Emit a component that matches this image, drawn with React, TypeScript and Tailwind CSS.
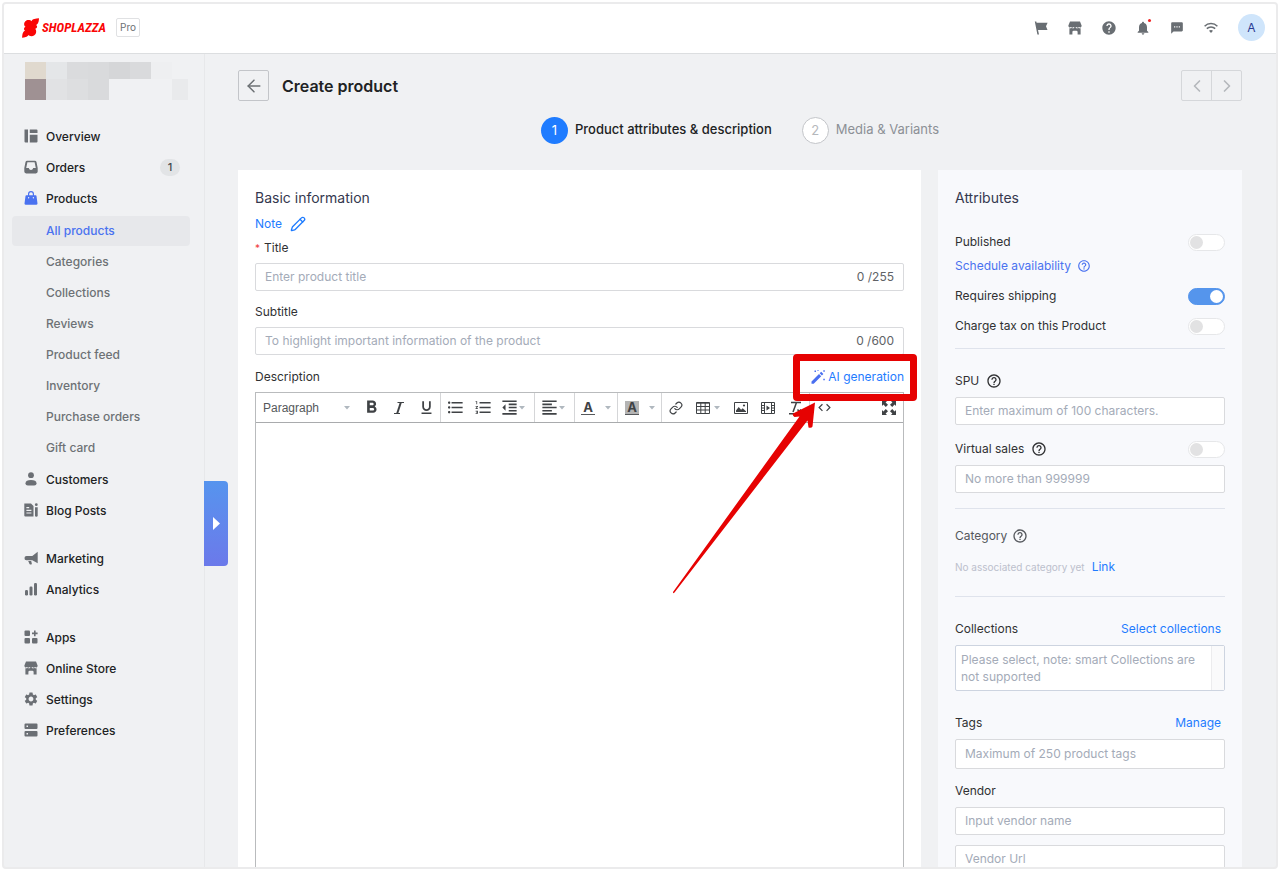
import type { ReactNode } from "react"
import clsx from "clsx"
import { ArrowLeft, ChevronLeft, ChevronRight, Link, Pencil } from "lucide-react"
import {
  MdCode,
  MdFormatAlignLeft,
  MdFormatBold,
  MdFormatIndentDecrease,
  MdFormatListBulleted,
  MdFormatListNumbered,
  MdFormatUnderlined,
  MdHelp,
  MdHelpOutline,
  MdNotifications,
  MdSettings,
  MdTextsms,
} from "react-icons/md"

type IconProps = {
  children: ReactNode
  className?: string
}

// Filled icon on a 14px grid
function Glyph({ children, className = "size-3.5" }: IconProps) {
  return (
    <svg viewBox="0 0 14 14" fill="currentColor" className={clsx("shrink-0", className)} aria-hidden="true">
      {children}
    </svg>
  )
}

const StoreIcon = () => (
  <Glyph>
    <path d="M2 .5h10l1.600 3.900v.7a1.500 1.500 0 0 1-2.500 1 1.800 1.800 0 0 1-2.700 0 1.800 1.800 0 0 1-2.800 0 1.800 1.800 0 0 1-2.700 0 1.500 1.500 0 0 1-2.500-1v-.7z" />
    <path d="M1.400 7.300c1 .2 1.800-.1 2.200-.4.900.6 2 .5 2.700 0h1.400c.8.500 1.900.6 2.700 0 .5.300 1.200.6 2.200.4v6.200H9.600V11a1.300 1.300 0 0 0-1.300-1.300H5.700A1.300 1.300 0 0 0 4.400 11v2.500h-3z" />
  </Glyph>
)

const icons: Record<string, ReactNode> = {
  overview: (
    <Glyph>
      <path d="M.5 .5h3.500v13H1.500a1 1 0 0 1-1-1zM5.800 .5h6.700a1 1 0 0 1 1 1V4H5.800zM5.800 5.800h7.700v6.700a1 1 0 0 1-1 1H5.800z" />
    </Glyph>
  ),
  orders: (
    <Glyph>
      <path
        fillRule="evenodd"
        d="M3.200 .7h7.600a1.800 1.800 0 0 1 1.700 1.400l1.200 6v3.500a1.800 1.800 0 0 1-1.800 1.800H2.100a1.800 1.800 0 0 1-1.800-1.800V8.100l1.200-6A1.800 1.800 0 0 1 3.200 .7zm.2 1.500L2.200 8h2.600c.3 1.300 1.100 1.900 2.200 1.900s1.900-.6 2.200-1.900h2.600l-1.200-5.800z"
      />
    </Glyph>
  ),
  products: (
    <Glyph>
      <path
        fillRule="evenodd"
        d="M4 4.200V3a3 3 0 0 1 6 0v1.200h1.600a.9.9 0 0 1 .9.8l1 7.600a1 1 0 0 1-1 1.100h-11a1 1 0 0 1-1-1.100L1.500 5a.9.9 0 0 1 .9-.8zm1.200 0h3.600V3a1.800 1.800 0 0 0-3.600 0zM4.600 6a.7.7 0 1 0 0 1.400.7.7 0 0 0 0-1.400zm4.800 0a.7.7 0 1 0 0 1.400.7.7 0 0 0 0-1.400z"
      />
    </Glyph>
  ),
  customers: (
    <Glyph>
      <circle cx="7" cy="3.200" r="2.900" />
      <path d="M1.500 11.200C1.500 9 3.600 8 7 8s5.500 1 5.500 3.200c0 1.500-1 2.200-2.300 2.200H3.800c-1.300 0-2.300-.7-2.300-2.200z" />
    </Glyph>
  ),
  blog: (
    <Glyph>
      <path
        fillRule="evenodd"
        d="M.3 .5H7L9.500 3v10.500H1.300a1 1 0 0 1-1-1zM2.400 4v1.200h2.800V4zm0 2.700v1.200h5V6.700zm0 2.700v1.200h5V9.400z"
      />
      <path d="M11 4.200h2.700v8.300a1.300 1.300 0 0 1-2.700 0z" />
      <circle cx="12.300" cy="1.700" r="1.400" />
    </Glyph>
  ),
  marketing: (
    <Glyph>
      <path d="M13.700 .8v11.500L8.300 9.200H2.500A2 2 0 0 1 .5 7a2 2 0 0 1 2-2h5.800zM4.200 10h3l.6 2.400c.1.700-.3 1.100-.9 1.100h-.6c-.5 0-.8-.3-.9-.8z" />
    </Glyph>
  ),
  analytics: (
    <Glyph>
      <rect x="1" y="8" width="3" height="5.500" rx="1.200" />
      <rect x="5.500" y="4.500" width="3" height="9" rx="1.200" />
      <rect x="10" y="1" width="3" height="12.500" rx="1.200" />
    </Glyph>
  ),
  apps: (
    <Glyph>
      <rect x=".5" y=".6" width="5.500" height="5.500" rx="1" />
      <rect x=".5" y="8" width="5.500" height="5.500" rx="1" />
      <rect x="8" y="8" width="5.500" height="5.500" rx="1" />
      <path d="M10 .6h1.600v2h2v1.600h-2v2H10v-2H8V2.600h2z" />
    </Glyph>
  ),
  store: <StoreIcon />,
  settings: <MdSettings className="-mx-px size-4 shrink-0" />,
  preferences: (
    <Glyph>
      <path
        fillRule="evenodd"
        d="M1.500.5h11a1 1 0 0 1 1 1V5a1 1 0 0 1-1 1h-11a1 1 0 0 1-1-1V1.500a1 1 0 0 1 1-1zm1 2V4H4V2.500zM1.500 8h11a1 1 0 0 1 1 1v3.500a1 1 0 0 1-1 1h-11a1 1 0 0 1-1-1V9a1 1 0 0 1 1-1zm1 2v1.500H4V10z"
      />
    </Glyph>
  ),
}

type NavItem = {
  label: string
  icon: string
  count?: number
  active?: boolean
  children?: string[]
}

const NAV: NavItem[][] = [
  [
    { label: "Overview", icon: "overview" },
    { label: "Orders", icon: "orders", count: 1 },
    {
      label: "Products",
      icon: "products",
      active: true,
      children: [
        "All products",
        "Categories",
        "Collections",
        "Reviews",
        "Product feed",
        "Inventory",
        "Purchase orders",
        "Gift card",
      ],
    },
    { label: "Customers", icon: "customers" },
    { label: "Blog Posts", icon: "blog" },
  ],
  [
    { label: "Marketing", icon: "marketing" },
    { label: "Analytics", icon: "analytics" },
  ],
  [
    { label: "Apps", icon: "apps" },
    { label: "Online Store", icon: "store" },
    { label: "Settings", icon: "settings" },
    { label: "Preferences", icon: "preferences" },
  ],
]

// Placeholder blocks for the hidden store name
const MOSAIC = [
  ["bg-[#e0d9ce]", "bg-[#e4e6e8]", "bg-[#dadbdd]", "bg-[#d9dadc]", "bg-[#d5d6d8]", "bg-[#d9dadc]", "bg-[#eeeff1]", ""],
  ["bg-[#9f9193]", "bg-[#e1e2e4]", "bg-[#dddee0]", "bg-[#d9dadc]", "", "", "", "bg-[#e9eaec]"],
]

function Header() {
  return (
    <header className="flex h-[50px] shrink-0 items-center justify-between border-b border-[#dcdee0] bg-white pb-0.5 pl-[18px] pr-[11px]">
      <div className="flex items-center">
        <a href="#home" className="flex items-center gap-[3px] text-[#fa0606]" aria-label="Shoplazza">
          <svg viewBox="0 0 17 20" fill="currentColor" className="h-5 w-[17px]" aria-hidden="true">
            <path d="M17 .3c-.1 2.400-.5 4.200-1.200 5.300-.4.600-1 1-1.600 1.300 1 .8 1.200 2 .5 2.900-.4.600-1 .8-1.500 1 1 1 1.200 2.800.8 4.200-.6 2-2.300 3.200-4.600 3.200-1.400 0-2.400-.5-3-1.200-.5 1-1.500 1.700-2.700 2.100-1.100.4-2.300.6-3.600.7.1-2.300.3-4.200 1-5.400.5-.9 1.200-1.400 2-1.600-1-.7-1.400-1.900-.8-3 .3-.5.700-.8 1.200-1C2 7.700 1.700 5.700 2.600 4.200 3.600 2.500 5.500 1.900 7.200 2.100c1 .1 1.700.5 2.200 1.100.5-1 1.500-1.700 2.900-2.100C13.700.7 15.300.5 17 .3z" />
          </svg>
          <span className="w-[65px] font-['Roboto_Condensed','Liberation_Sans',sans-serif] text-[13px] font-bold italic leading-5">
            SHOPLAZZA
          </span>
        </a>
        <span className="ml-[9px] rounded-xs border border-[#e0e1e3] px-[3px] text-[10px] leading-[17px] text-[#6d7175]">
          Pro
        </span>
      </div>

      <div className="flex items-center gap-5 text-[#696e73]">
        <button aria-label="Tasks">
          <Glyph>
            <path d="M.8.500h1.500l.3 1.300h11L12 5.300l1.500 3.600H4l1 4.600H3.400z" />
          </Glyph>
        </button>
        <button aria-label="View store">
          <StoreIcon />
        </button>
        <button aria-label="Help">
          <MdHelp className="-mx-px size-4" />
        </button>
        <button aria-label="Notifications" className="relative">
          <MdNotifications className="-mx-px size-4" />
          <span className="absolute -right-px -top-px size-[3px] rounded-full bg-[#f02020]" />
        </button>
        <button aria-label="Messages">
          <MdTextsms className="size-3.5" />
        </button>
        <button aria-label="Network">
          <svg viewBox="0 0 14 14" fill="none" stroke="currentColor" strokeWidth="1.500" className="size-3.5" aria-hidden="true">
            <path d="M.6 5.200a9 9 0 0 1 12.800 0M2.800 7.600a6 6 0 0 1 8.400 0" />
            <path d="M5 9.800a3 3 0 0 1 4 0L7 12z" fill="currentColor" stroke="none" />
          </svg>
        </button>
        <button className="size-[27px] rounded-full bg-[#cfe5fb] text-[12px] text-[#2b3a92]">A</button>
      </div>
    </header>
  )
}

function Sidebar() {
  return (
    <aside className="w-[201px] shrink-0 border-r border-[#e7e8ea] pl-2 pr-[14px] pt-2">
      <div className="ml-[13px] h-[38px]">
        {MOSAIC.map((row, index) => (
          <div key={index} className={clsx("flex", index === 0 ? "h-[17px]" : "h-[21px]")}>
            {row.map((color, cell) => (
              <span key={cell} className={clsx("w-[21px] last:w-4", color)} />
            ))}
          </div>
        ))}
      </div>

      <nav className="mt-[21px] space-y-[17px]">
        {NAV.map((group, index) => (
          <ul key={index}>
            {group.map((item) => (
              <li key={item.label}>
                <a href="#nav" className="flex h-[31px] items-center pl-3 pr-2.5 text-[12px] font-medium text-[#202223]">
                  <span className={clsx("pb-px", item.active ? "text-[#4a72f0]" : "text-[#6b6f74]")}>
                    {icons[item.icon]}
                  </span>
                  <span className="ml-2">{item.label}</span>
                  {item.count && (
                    <span className="ml-auto w-5 rounded-full bg-[#e2e4e6] text-center text-[11px] leading-[17px] text-[#44474a]">
                      {item.count}
                    </span>
                  )}
                </a>

                {item.children && (
                  <ul className="mt-0.5">
                    {item.children.map((child, i) => (
                      <li key={child} className="h-[31px]">
                        <a
                          href="#nav"
                          className={clsx(
                            "flex h-[30px] items-center rounded-sm pl-[34px] text-[12px] font-medium",
                            i === 0 ? "bg-[#e7e8eb] text-[#4a72f0]" : "text-[#6d7175]",
                          )}
                        >
                          {child}
                        </a>
                      </li>
                    ))}
                  </ul>
                )}
              </li>
            ))}
          </ul>
        ))}
      </nav>
    </aside>
  )
}

type FieldProps = {
  id: string
  placeholder: string
  count?: string
  className?: string
}

function Field({ id, placeholder, count, className = "h-7" }: FieldProps) {
  return (
    <div className={clsx("flex items-center rounded-xs border border-[#d9dadd] bg-white px-[9px] text-[12px]", className)}>
      <input
        id={id}
        aria-label={placeholder}
        placeholder={placeholder}
        className="min-w-0 flex-1 bg-transparent outline-none placeholder:text-[#a4abb8]"
      />
      {count && <span className="text-[#606266]">{count}</span>}
    </div>
  )
}

function Caret() {
  return (
    <svg viewBox="0 0 6 4" className="h-1 w-1.5 shrink-0 fill-[#b0b8bf]" aria-hidden="true">
      <path d="M0 0h6L3 3.500z" />
    </svg>
  )
}

type ToolProps = {
  label: string
  children: ReactNode
  className?: string
}

function Tool({ label, children, className = "w-[27px]" }: ToolProps) {
  return (
    <button aria-label={label} className={clsx("flex h-full shrink-0 items-center justify-center", className)}>
      {children}
    </button>
  )
}

function Toolbar() {
  return (
    <div className="flex h-[30px] items-stretch border-b border-[#a9abad] text-[#3f4245]">
      <div className="flex border-r border-[#d5d6d8]">
        <label className="relative flex w-[102px] items-center pl-[7px]">
          <select
            aria-label="Text style"
            className="w-[88px] appearance-none font-['Liberation_Sans',sans-serif] text-[12px] text-[#55585b] outline-none"
          >
            <option>Paragraph</option>
          </select>
          <span className="pointer-events-none absolute right-2">
            <Caret />
          </span>
        </label>
        <Tool label="Bold">
          <MdFormatBold className="size-[21px]" />
        </Tool>
        <Tool label="Italic">
          <svg viewBox="0 0 14 14" fill="none" stroke="currentColor" strokeWidth="1.200" className="size-3.5" aria-hidden="true">
            <path d="M5.500 1.500H12M2 12.500h6" />
            <path d="M8.800 1.500L5.200 12.500" strokeWidth="2" />
          </svg>
        </Tool>
        <Tool label="Underline" className="w-7">
          <MdFormatUnderlined className="size-[17px]" />
        </Tool>
      </div>

      <div className="flex border-r border-[#d5d6d8]">
        <Tool label="Bullet list" className="w-7">
          <MdFormatListBulleted className="size-[19px]" />
        </Tool>
        <Tool label="Numbered list" className="w-7">
          <MdFormatListNumbered className="size-[19px]" />
        </Tool>
        <Tool label="Outdent" className="w-[37px] pr-1.5">
          <MdFormatIndentDecrease className="size-[19px]" />
          <Caret />
        </Tool>
      </div>

      <div className="flex border-r border-[#d5d6d8]">
        <Tool label="Align left" className="w-[39px] pr-1">
          <MdFormatAlignLeft className="size-[19px]" />
          <Caret />
        </Tool>
      </div>

      <div className="flex border-r border-[#d5d6d8]">
        <Tool label="Text color" className="w-[42px] gap-2.5">
          <span className="w-3.5 border-b border-[#55585b] text-center text-[13px] font-bold leading-[13px]">A</span>
          <Caret />
        </Tool>
      </div>

      <div className="flex border-r border-[#d5d6d8]">
        <Tool label="Background color" className="w-[43px] gap-2.5 pl-px">
          <span className="w-3.5 border-b border-[#55585b] bg-[#b4b4b4] text-center text-[13px] font-bold leading-[13px]">
            A
          </span>
          <Caret />
        </Tool>
      </div>

      <div className="flex border-r border-[#d5d6d8]">
        <Tool label="Insert link">
          <Link className="size-3.5" strokeWidth={2} />
        </Tool>
        <Tool label="Insert table" className="w-[38px] gap-1">
          <svg viewBox="0 0 14 14" fill="none" stroke="currentColor" className="size-3.5" aria-hidden="true">
            <path d="M.5 1.500h13v11H.5zM.5 2.200h13M.5 5.500h13M.5 9h13M4.800 2v10.500M9.200 2v10.500" />
          </svg>
          <Caret />
        </Tool>
        <Tool label="Insert image">
          <svg viewBox="0 0 14 14" className="size-3.5" aria-hidden="true">
            <path d="M.5 1.500h13v11H.5z" fill="none" stroke="currentColor" />
            <path d="M2 11V9.500l2.700-3.600 2.400 2.800 1.600-1.500 3.300 3V11z" fill="currentColor" />
            <circle cx="10" cy="4.500" r="1.100" fill="currentColor" />
          </svg>
        </Tool>
        <Tool label="Insert video">
          <svg viewBox="0 0 14 14" className="size-3.5" aria-hidden="true">
            <path
              d="M.5 1.500h13v11H.5zM3.500 1.500v11M10.500 1.500v11M.5 4.500h3M.5 7h3M.5 9.500h3M10.500 4.500h3M10.500 7h3M10.500 9.500h3"
              fill="none"
              stroke="currentColor"
            />
            <path d="M5.500 4.500L9 7 5.500 9.500z" fill="currentColor" />
          </svg>
        </Tool>
        <Tool label="Clear formatting" className="w-7">
          <svg viewBox="0 0 14 14" fill="none" stroke="currentColor" strokeWidth="1.500" className="size-3.5" aria-hidden="true">
            <path d="M3 1.500h10M8.500 1.500L5 11M1 12.800h7M9.500 8.500l3.500 4M13 8.500l-3.500 4" />
          </svg>
        </Tool>
      </div>

      <Tool label="Source code" className="w-7">
        <MdCode className="size-[15px]" />
      </Tool>
      <Tool label="Fullscreen" className="ml-auto w-7">
        <Glyph>
          <path d="M0 0h5L3.600 1.400 6 3.800 3.800 6 1.400 3.600 0 5zM14 0v5l-1.400-1.400L10.200 6 8 3.800l2.400-2.400L9 0zM0 14V9l1.400 1.400L3.800 8 6 10.200l-2.400 2.400L5 14zM14 14H9l1.400-1.400L8 10.200 10.200 8l2.400 2.400L14 9z" />
        </Glyph>
      </Tool>
    </div>
  )
}

// Red frame and arrow that point out the AI button
function Callout() {
  return (
    <>
      <span className="pointer-events-none absolute -right-[13px] -top-3 z-10 h-[47px] w-[124px] rounded-sm border-[7px] border-[#e60202]" />
      <svg
        viewBox="672 400 150 196"
        className="pointer-events-none absolute right-[82px] top-[34px] z-10 h-[196px] w-[150px] fill-[#e60202]"
        aria-hidden="true"
      >
        <path d="M815 402.500L812.500 426.500Q811.500 428.500 808.500 427.500L807.500 420.500L674.500 592.500Q673 594 673 592L799.500 416.500L794.500 417Q792 415.500 793 413.500Z" />
      </svg>
    </>
  )
}

function BasicInformation() {
  return (
    <section className="flex min-w-0 flex-1 flex-col bg-white px-[17px] pt-4">
      <h2 className="text-[14px] leading-6 text-[#35384f]">Basic information</h2>
      <a href="#note" className="flex h-[27px] items-center gap-2 text-[12px] text-[#1f7cff]">
        Note
        <Pencil className="size-4" />
      </a>

      <label htmlFor="title" className="mb-1 flex h-[22px] items-center gap-1 text-[12px] text-[#303133]">
        <span className="text-[10px] text-[#f03c3c]">*</span>
        Title
      </label>
      <Field id="title" placeholder="Enter product title" count="0 /255" />

      <label htmlFor="subtitle" className="mb-1 mt-2.5 text-[12px] leading-[22px] text-[#303133]">
        Subtitle
      </label>
      <Field id="subtitle" placeholder="To highlight important information of the product" count="0 /600" />

      <div className="relative mb-1 mt-[11px] flex h-[22px] items-center justify-between text-[12px]">
        <label htmlFor="description" className="text-[#303133]">
          Description
        </label>
        <button className="flex items-center gap-[3px] text-[#1f7cff]">
          <Glyph className="size-3.5 text-[#4a6ff0]">
            <path d="M8 4l2.200 2.200-7.500 7.500H.5v-2.200zM8.700 3.300l1.500-1.500 2.200 2.200-1.500 1.500z" />
            <path d="M3.500.5h1.500V2H3.500zM12.300.3h1.500v1.500h-1.500zM12.300 8.800h1.500v1.500h-1.500zM6.500 0h1v1h-1z" />
          </Glyph>
          AI generation
        </button>
        <Callout />
      </div>

      {/* Editor */}
      <div className="flex flex-1 flex-col border border-[#b9bbbd]">
        <Toolbar />
        <textarea id="description" className="min-h-[440px] flex-1 resize-none outline-none" />
      </div>
    </section>
  )
}

type SwitchProps = {
  label: string
  on?: boolean
}

function Switch({ label, on = false }: SwitchProps) {
  return (
    <input
      type="checkbox"
      role="switch"
      aria-label={label}
      defaultChecked={on}
      className="h-[17px] w-[37px] shrink-0 appearance-none rounded-full border border-[#e6e7e9] bg-white before:m-px before:block before:size-[13px] before:rounded-full before:bg-[#e2e2e3] checked:border-[#5595ec] checked:bg-[#5595ec] checked:before:ml-[21px] checked:before:bg-white"
    />
  )
}

function Attributes() {
  return (
    <aside className="w-[304px] shrink-0 bg-[#f8f9fc] px-[17px] pb-6 pt-4 text-[12px] leading-6 text-[#303133]">
      <h2 className="mb-5 text-[14px] leading-6 text-[#35384f]">Attributes</h2>

      <div className="flex items-center justify-between">
        Published
        <Switch label="Published" />
      </div>
      <a href="#schedule" className="flex items-center gap-1.5 text-[#4a72f0]">
        Schedule availability
        <MdHelpOutline className="size-3.5" />
      </a>
      <div className="mt-1.5 flex items-center justify-between">
        Requires shipping
        <Switch label="Requires shipping" on />
      </div>
      <div className="mt-1.5 flex items-center justify-between">
        Charge tax on this Product
        <Switch label="Charge tax on this Product" />
      </div>

      <hr className="mb-5 mt-2.5 border-[#dfe3ec]" />

      <label htmlFor="spu" className="mb-1 flex items-center gap-[7px]">
        SPU
        <MdHelpOutline className="size-4" />
      </label>
      <Field id="spu" placeholder="Enter maximum of 100 characters." />

      <div className="mb-1 mt-3 flex items-center justify-between">
        <label htmlFor="virtual-sales" className="flex items-center gap-[7px]">
          Virtual sales
          <MdHelpOutline className="size-4" />
        </label>
        <Switch label="Virtual sales" />
      </div>
      <Field id="virtual-sales" placeholder="No more than 999999" />

      <hr className="my-[15px] border-[#dfe3ec]" />

      <h3 className="flex items-center gap-[5px] text-[#55585d]">
        Category
        <MdHelpOutline className="size-4" />
      </h3>
      <p className="mt-[7px] flex items-center gap-[7px]">
        <span className="text-[10px] text-[#bcc0cc]">No associated category yet</span>
        <a href="#link" className="text-[#1f7cff]">
          Link
        </a>
      </p>

      <hr className="mb-5 mt-[17px] border-[#dfe3ec]" />

      <div className="mb-1 flex justify-between pr-1">
        <label htmlFor="collections">Collections</label>
        <button className="text-[#1f7cff]">Select collections</button>
      </div>
      <div className="flex h-[46px] rounded-xs border border-[#cdd4e0] bg-white">
        <textarea
          id="collections"
          placeholder="Please select, note: smart Collections are not supported"
          className="min-w-0 flex-1 resize-none overflow-hidden pl-[5px] pt-[5px] leading-[17px] outline-none placeholder:text-[#a4abb8]"
        />
        <span className="w-[13px] border-l border-[#ececee] bg-[#fafafb]" />
      </div>

      <div className="mb-1 mt-5 flex justify-between pr-1">
        <label htmlFor="tags">Tags</label>
        <button className="text-[#1f7cff]">Manage</button>
      </div>
      <Field id="tags" placeholder="Maximum of 250 product tags" className="h-[30px]" />

      <label htmlFor="vendor" className="mb-1 mt-2.5 block">
        Vendor
      </label>
      <Field id="vendor" placeholder="Input vendor name" />
      <Field id="vendor-url" placeholder="Vendor Url" className="mt-2.5 h-7" />
    </aside>
  )
}

export default function App() {
  return (
    <div className="h-screen bg-white p-1 font-[Inter,'Liberation_Sans',sans-serif]">
      <div className="flex h-full flex-col overflow-hidden rounded-xs bg-[#f0f1f3] ring-2 ring-[#ebebec]">
        <Header />

        <div className="flex min-h-0 flex-1">
          <Sidebar />

          <div className="relative min-w-0 flex-1">
            <button
              aria-label="Expand panel"
              className="absolute -left-px top-[427px] flex h-[85px] w-6 items-center justify-center rounded-r-sm bg-linear-to-b from-[#5594ee] to-[#6b79ea]"
            >
              <svg viewBox="0 0 7 13" className="h-[13px] w-[7px] fill-white" aria-hidden="true">
                <path d="M0 0l7 6.500L0 13z" />
              </svg>
            </button>

            <main className="h-full overflow-y-auto pl-[33px] pr-[34px] pt-4 [scrollbar-width:none]">
              {/* Page title */}
              <div className="flex items-center">
                <button
                  aria-label="Back"
                  className="flex size-[31px] items-center justify-center rounded-xs border border-[#c3c5c9] text-[#6d7175]"
                >
                  <ArrowLeft className="size-5" strokeWidth={1.8} />
                </button>
                <h1 className="ml-[13px] text-[16px] font-semibold text-[#202223]">Create product</h1>
                <div className="ml-auto flex divide-x divide-[#d5d7da] rounded-xs border border-[#d5d7da] text-[#b5b8bc]">
                  <button aria-label="Previous product" className="flex h-[29px] w-[30px] items-center justify-center">
                    <ChevronLeft className="size-5" />
                  </button>
                  <button aria-label="Next product" className="flex h-[29px] w-[29px] items-center justify-center">
                    <ChevronRight className="size-5" />
                  </button>
                </div>
              </div>

              {/* Steps */}
              <ol className="mt-[15px] flex h-7 items-center justify-center gap-[30px] text-[13px]">
                <li className="flex items-center gap-[7px] font-medium text-[#202223]">
                  <span className="size-[27px] rounded-full bg-[#1f7cff] text-center font-normal leading-[27px] text-white">
                    1
                  </span>
                  Product attributes &amp; description
                </li>
                <li className="flex items-center gap-[7px] text-[#8c9096]">
                  <span className="size-[27px] rounded-full border border-[#c3c5c9] bg-white text-center leading-[25px] text-[#b5b8bc]">
                    2
                  </span>
                  Media &amp; Variants
                </li>
              </ol>

              <div className="mt-[26px] flex gap-[17px]">
                <BasicInformation />
                <Attributes />
              </div>
            </main>
          </div>
        </div>
      </div>
    </div>
  )
}
